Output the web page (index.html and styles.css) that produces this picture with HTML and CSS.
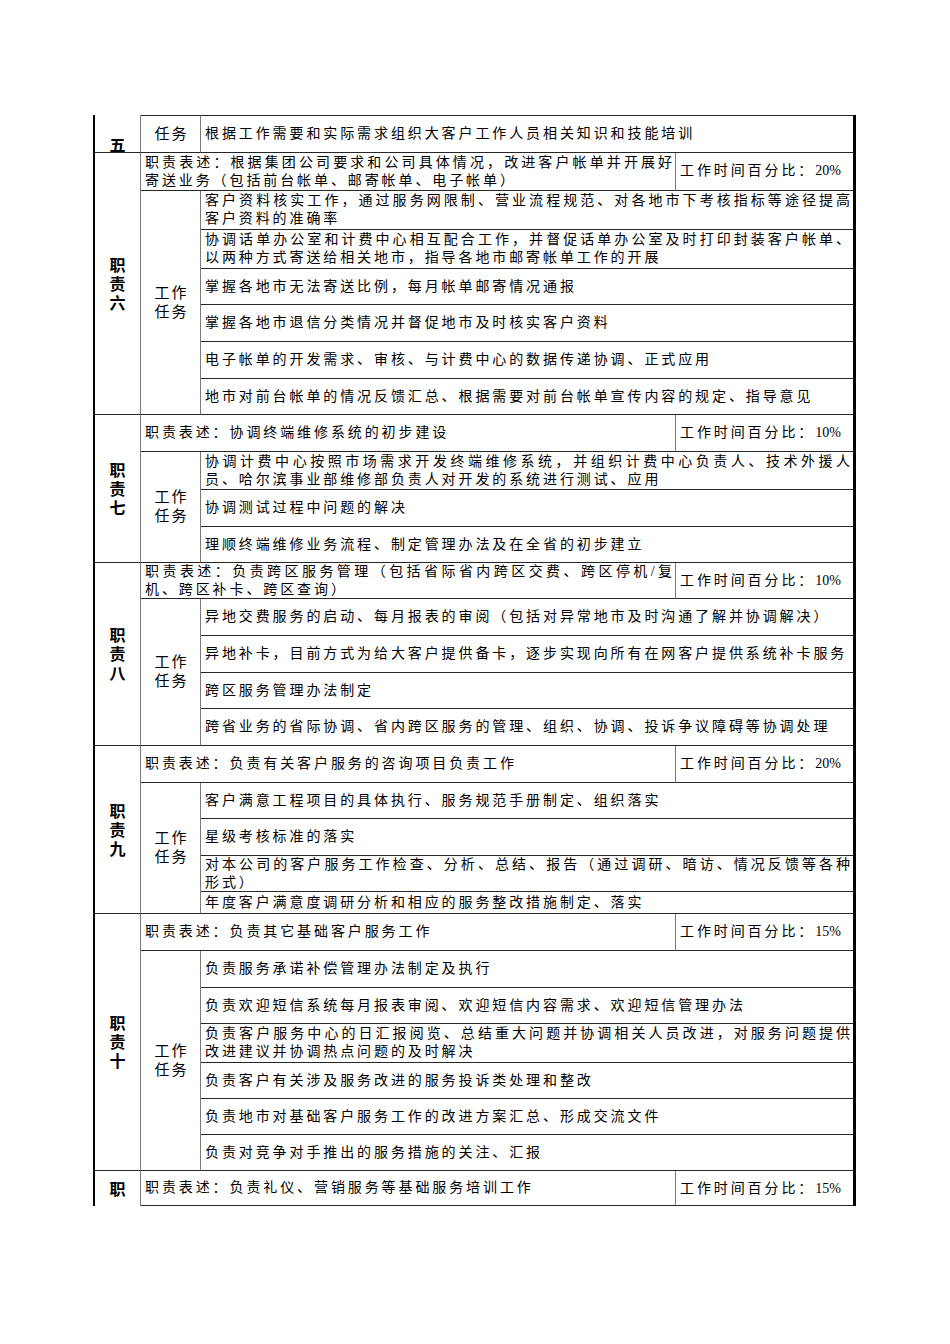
FILE: index.html
```html
<!DOCTYPE html>
<html lang="zh-CN">
<head>
<meta charset="utf-8">
<title>岗位职责说明</title>
<link rel="stylesheet" href="styles.css">
</head>
<body>
<div class="sheet">
  <div class="cell c1 head"><span class="five">五</span></div>
  <div class="cell c2 label first">任务</div>
  <div class="cell task first">根据工作需要和实际需求组织大客户工作人员相关知识和技能培训</div>

  <div class="cell c1 rs7"><span class="duty">职责六</span></div>
  <div class="cell desc"><span class="ln full">职责表述：根据集团公司要求和公司具体情况，改进客户帐单并开展好</span><span class="ln">寄送业务（包括前台帐单、邮寄帐单、电子帐单）</span></div>
  <div class="cell pct">工作时间百分比：<span class="num">20%</span></div>
  <div class="cell c2 label rs6">工作<br>任务</div>
  <div class="cell task"><span class="ln full">客户资料核实工作，通过服务网限制、营业流程规范、对各地市下考核指标等途径提高</span><span class="ln">客户资料的准确率</span></div>
  <div class="cell task"><span class="ln full">协调话单办公室和计费中心相互配合工作，并督促话单办公室及时打印封装客户帐单、</span><span class="ln">以两种方式寄送给相关地市，指导各地市邮寄帐单工作的开展</span></div>
  <div class="cell task">掌握各地市无法寄送比例，每月帐单邮寄情况通报</div>
  <div class="cell task">掌握各地市退信分类情况并督促地市及时核实客户资料</div>
  <div class="cell task">电子帐单的开发需求、审核、与计费中心的数据传递协调、正式应用</div>
  <div class="cell task">地市对前台帐单的情况反馈汇总、根据需要对前台帐单宣传内容的规定、指导意见</div>

  <div class="cell c1 rs4"><span class="duty">职责七</span></div>
  <div class="cell desc">职责表述：协调终端维修系统的初步建设</div>
  <div class="cell pct">工作时间百分比：<span class="num">10%</span></div>
  <div class="cell c2 label rs3">工作<br>任务</div>
  <div class="cell task"><span class="ln full">协调计费中心按照市场需求开发终端维修系统，并组织计费中心负责人、技术外援人</span><span class="ln">员、哈尔滨事业部维修部负责人对开发的系统进行测试、应用</span></div>
  <div class="cell task">协调测试过程中问题的解决</div>
  <div class="cell task">理顺终端维修业务流程、制定管理办法及在全省的初步建立</div>

  <div class="cell c1 rs5"><span class="duty">职责八</span></div>
  <div class="cell desc"><span class="ln full">职责表述：负责跨区服务管理（包括省际省内跨区交费、跨区停机/复</span><span class="ln">机、跨区补卡、跨区查询）</span></div>
  <div class="cell pct">工作时间百分比：<span class="num">10%</span></div>
  <div class="cell c2 label rs4">工作<br>任务</div>
  <div class="cell task">异地交费服务的启动、每月报表的审阅（包括对异常地市及时沟通了解并协调解决）</div>
  <div class="cell task">异地补卡，目前方式为给大客户提供备卡，逐步实现向所有在网客户提供系统补卡服务</div>
  <div class="cell task">跨区服务管理办法制定</div>
  <div class="cell task">跨省业务的省际协调、省内跨区服务的管理、组织、协调、投诉争议障碍等协调处理</div>

  <div class="cell c1 rs5"><span class="duty">职责九</span></div>
  <div class="cell desc">职责表述：负责有关客户服务的咨询项目负责工作</div>
  <div class="cell pct">工作时间百分比：<span class="num">20%</span></div>
  <div class="cell c2 label rs4">工作<br>任务</div>
  <div class="cell task">客户满意工程项目的具体执行、服务规范手册制定、组织落实</div>
  <div class="cell task">星级考核标准的落实</div>
  <div class="cell task"><span class="ln full">对本公司的客户服务工作检查、分析、总结、报告（通过调研、暗访、情况反馈等各种</span><span class="ln">形式）</span></div>
  <div class="cell task">年度客户满意度调研分析和相应的服务整改措施制定、落实</div>

  <div class="cell c1 rs7"><span class="duty">职责十</span></div>
  <div class="cell desc">职责表述：负责其它基础客户服务工作</div>
  <div class="cell pct">工作时间百分比：<span class="num">15%</span></div>
  <div class="cell c2 label rs6">工作<br>任务</div>
  <div class="cell task">负责服务承诺补偿管理办法制定及执行</div>
  <div class="cell task">负责欢迎短信系统每月报表审阅、欢迎短信内容需求、欢迎短信管理办法</div>
  <div class="cell task"><span class="ln full">负责客户服务中心的日汇报阅览、总结重大问题并协调相关人员改进，对服务问题提供</span><span class="ln">改进建议并协调热点问题的及时解决</span></div>
  <div class="cell task">负责客户有关涉及服务改进的服务投诉类处理和整改</div>
  <div class="cell task">负责地市对基础客户服务工作的改进方案汇总、形成交流文件</div>
  <div class="cell task">负责对竞争对手推出的服务措施的关注、汇报</div>

  <div class="cell c1 open"><span class="duty">职</span></div>
  <div class="cell desc">职责表述：负责礼仪、营销服务等基础服务培训工作</div>
  <div class="cell pct">工作时间百分比：<span class="num">15%</span></div>
</div>
</body>
</html>
```

FILE: styles.css
```css
html, body {
  margin: 0;
  padding: 0;
  background: #ffffff;
}

body {
  font-family: "Liberation Serif", "Noto Sans CJK SC", serif;
  color: #000000;
}

.sheet {
  margin: 115px 0 0 93px;
  width: 758px;
  border-left: 2px solid #000000;
  border-right: 3px solid #000000;
  display: grid;
  grid-template-columns: 46px 60px 475px 177px;
  grid-template-rows:
    38px 38px 39px 39px 36px 37px 37px 36px
    37px 38px 37px 36px
    36px 37px 37px 36px 37px
    37px 36px 37px 36px 22px
    37px 37px 36px 39px 36px 36px 36px
    35px;
}

.cell {
  box-sizing: border-box;
  border-bottom: 1px solid #262626;
  display: flex;
  flex-direction: column;
  justify-content: center;
  min-width: 0;
  overflow: hidden;
  font-size: 14px;
  line-height: 18px;
  letter-spacing: 2.9px;
  padding-left: 4px;
  font-family: "Liberation Serif", "Noto Sans CJK SC", serif;
}

.first {
  border-top: 1px solid #262626;
}

.c1 {
  grid-column: 1;
  border-right: 1px solid #7a7a7a;
  padding-left: 0;
  align-items: center;
  text-align: center;
  font-family: "Noto Sans CJK SC", sans-serif;
  font-weight: 700;
  font-size: 16px;
  line-height: 19px;
  letter-spacing: 0;
}

.duty {
  display: block;
  writing-mode: vertical-rl;
  text-orientation: upright;
  letter-spacing: 3px;
  padding-top: 3px;
  line-height: 20px;
}

.head {
  justify-content: flex-end;
  overflow: visible;
}

.five {
  display: block;
  line-height: 16px;
}

.open {
  border-bottom: none;
}

.c2 {
  grid-column: 2;
  border-right: 1px solid #7a7a7a;
}

.label {
  align-items: center;
  text-align: center;
  padding-left: 2px;
  font-size: 15px;
  line-height: 19px;
  letter-spacing: 2px;
}

.desc {
  grid-column: 2 / 4;
  border-right: 1px solid #7a7a7a;
}

.pct {
  grid-column: 4;
  display: block;
  padding-top: 9px;
}

.num {
  letter-spacing: 0;
}

.task {
  grid-column: 3 / 5;
}

.ln {
  display: block;
}

.full {
  text-align: justify;
  text-align-last: justify;
}

.rs3 { grid-row: span 3; }
.rs4 { grid-row: span 4; }
.rs5 { grid-row: span 5; }
.rs6 { grid-row: span 6; }
.rs7 { grid-row: span 7; }
```
